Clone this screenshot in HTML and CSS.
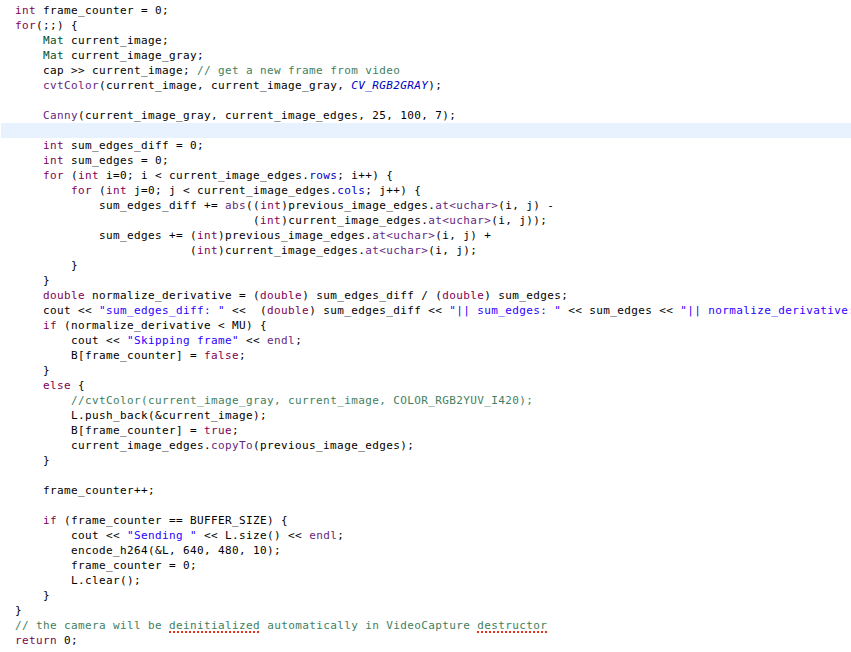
FILE: index.html
```html
<!DOCTYPE html>
<html lang="en">
<head>
    <meta charset="UTF-8">
    <title>main.cpp</title>
    <link rel="stylesheet" href="styles.css">
</head>
<body>
    <div class="editor">
<div class="line">  <span class="kw">int</span> frame_counter = 0;</div>
<div class="line">  <span class="kw">for</span>(;;) {</div>
<div class="line">      <span class="type">Mat</span> current_image;</div>
<div class="line">      <span class="type">Mat</span> current_image_gray;</div>
<div class="line">      cap &gt;&gt; current_image; <span class="cm">// get a new frame from video</span></div>
<div class="line">      <span class="fn">cvtColor</span>(current_image, current_image_gray, <span class="enum">CV_RGB2GRAY</span>);</div>
<div class="line"></div>
<div class="line">      <span class="fn">Canny</span>(current_image_gray, current_image_edges, 25, 100, 7);</div>
<div class="line current"></div>
<div class="line">      <span class="kw">int</span> sum_edges_diff = 0;</div>
<div class="line">      <span class="kw">int</span> sum_edges = 0;</div>
<div class="line">      <span class="kw">for</span> (<span class="kw">int</span> i=0; i &lt; current_image_edges.<span class="field">rows</span>; i++) {</div>
<div class="line">          <span class="kw">for</span> (<span class="kw">int</span> j=0; j &lt; current_image_edges.<span class="field">cols</span>; j++) {</div>
<div class="line">              sum_edges_diff += <span class="fn">abs</span>((<span class="kw">int</span>)previous_image_edges.<span class="fn">at&lt;uchar&gt;</span>(i, j) -</div>
<div class="line">                                    (<span class="kw">int</span>)current_image_edges.<span class="fn">at&lt;uchar&gt;</span>(i, j));</div>
<div class="line">              sum_edges += (<span class="kw">int</span>)previous_image_edges.<span class="fn">at&lt;uchar&gt;</span>(i, j) +</div>
<div class="line">                           (<span class="kw">int</span>)current_image_edges.<span class="fn">at&lt;uchar&gt;</span>(i, j);</div>
<div class="line">          }</div>
<div class="line">      }</div>
<div class="line">      <span class="kw">double</span> normalize_derivative = (<span class="kw">double</span>) sum_edges_diff / (<span class="kw">double</span>) sum_edges;</div>
<div class="line">      cout &lt;&lt; <span class="str">"sum_edges_diff: "</span> &lt;&lt;  (<span class="kw">double</span>) sum_edges_diff &lt;&lt; <span class="str">"|| sum_edges: "</span> &lt;&lt; sum_edges &lt;&lt; <span class="str">"|| normalize_derivative: "</span> &lt;&lt; normalize_derivative &lt;&lt; endl;</div>
<div class="line">      <span class="kw">if</span> (normalize_derivative &lt; MU) {</div>
<div class="line">          cout &lt;&lt; <span class="str">"Skipping frame"</span> &lt;&lt; <span class="fn">endl</span>;</div>
<div class="line">          B[frame_counter] = <span class="kw">false</span>;</div>
<div class="line">      }</div>
<div class="line">      <span class="kw">else</span> {</div>
<div class="line">          <span class="cm">//cvtColor(current_image_gray, current_image, COLOR_RGB2YUV_I420);</span></div>
<div class="line">          L.push_back(&amp;current_image);</div>
<div class="line">          B[frame_counter] = <span class="kw">true</span>;</div>
<div class="line">          current_image_edges.<span class="fn">copyTo</span>(previous_image_edges);</div>
<div class="line">      }</div>
<div class="line"></div>
<div class="line">      frame_counter++;</div>
<div class="line"></div>
<div class="line">      <span class="kw">if</span> (frame_counter == BUFFER_SIZE) {</div>
<div class="line">          cout &lt;&lt; <span class="str">"Sending "</span> &lt;&lt; L.size() &lt;&lt; <span class="fn">endl</span>;</div>
<div class="line">          encode_h264(&amp;L, 640, 480, 10);</div>
<div class="line">          frame_counter = 0;</div>
<div class="line">          L.clear();</div>
<div class="line">      }</div>
<div class="line">  }</div>
<div class="line">  <span class="cm">// the camera will be <span class="spell">deinitialized</span> automatically in VideoCapture <span class="spell">destructor</span></span></div>
<div class="line">  <span class="kw">return</span> 0;</div>
    </div>
</body>
</html>
```

FILE: styles.css
```css
body {
    margin: 0;
    background: #ffffff;
    overflow: hidden;
    height: 652px;
}

.editor {
    padding-top: 3px;
    padding-left: 1px;
    font-family: "DejaVu Sans Mono", monospace;
    font-size: 11px;
    letter-spacing: 0.38px;
    color: #000000;
}

.line {
    height: 15px;
    line-height: 15px;
    white-space: pre;
}

.line.current {
    background-color: #e8f2fe;
}

.kw {
    color: #7f0055;
}

.type {
    color: #005032;
}

.fn {
    color: #642880;
}

.field {
    color: #0000c0;
}

.enum {
    color: #0000c0;
    font-style: italic;
}

.str {
    color: #2a00ff;
}

.cm {
    color: #3f7f5f;
}

.spell {
    text-decoration: underline dotted #e4341c;
    text-decoration-thickness: 2px;
    text-underline-offset: 2px;
}
```
